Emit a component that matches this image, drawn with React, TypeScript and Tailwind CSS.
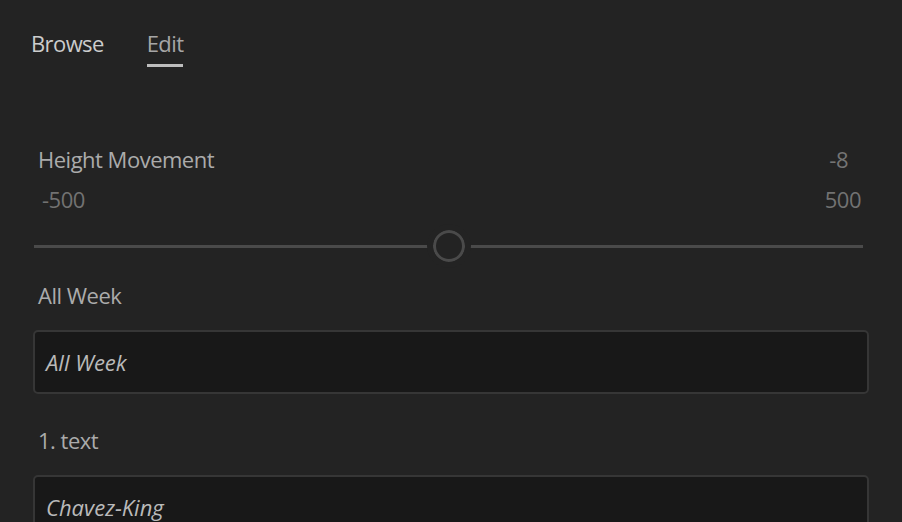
import React, { useState } from 'react';

const font = { fontFamily: '"Open Sans", "Noto Sans", sans-serif' };

export default function App() {
  const [tab, setTab] = useState<'browse' | 'edit'>('edit');
  const [value] = useState(-8);
  const min = -500;
  const max = 500;
  // thumb snaps to the nearest step of 100
  const pct = ((Math.round(value / 100) * 100 - min) / (max - min)) * 100;

  return (
    <div className="w-[902px] h-[522px] overflow-hidden bg-[#232323]" style={font}>
      {/* Tabs */}
      <div className="flex gap-[43px] pl-[31px] pt-[29px]">
        <button
          onClick={() => setTab('browse')}
          className="flex flex-col text-[22px] leading-[28px] tracking-[-0.6px] text-[#cccccc]"
        >
          <span>Browse</span>
          <span className={`mt-[7px] h-[3px] ${tab === 'browse' ? 'bg-[#bdbdbd]' : ''}`} />
        </button>
        <button
          onClick={() => setTab('edit')}
          className="flex flex-col text-[22px] leading-[28px] tracking-[-0.6px] text-[#a6a6a6]"
        >
          <span>Edit</span>
          <span className={`mt-[7px] h-[3px] ${tab === 'edit' ? 'bg-[#bdbdbd]' : ''}`} />
        </button>
      </div>

      <div className="px-[33px] pt-[78px]">
        {/* Slider */}
        <div className="flex justify-between px-[5px] text-[22px] leading-[28px] tracking-[-0.5px]">
          <span className="text-[#ababab]">Height Movement</span>
          <span className="text-[#747474] pr-[16px]">{value}</span>
        </div>
        <div className="flex justify-between pl-[9px] pr-[8px] mt-[12px] text-[22px] leading-[28px] tracking-[-0.5px] text-[#727272]">
          <span>{min}</span>
          <span>{max}</span>
        </div>
        <div className="relative h-[32px] mt-[17px] mr-[6px] ml-[1px] flex items-center">
          <div className="h-[3px] w-full bg-[#4a4a4a]" />
          <div
            className="absolute top-0 w-[32px] h-[32px] -ml-[16px] rounded-full border-[3px] border-[#4a4a4a] bg-[#232323] outline-[6px] outline-solid outline-[#232323]"
            style={{ left: `${pct}%` }}
          />
        </div>

        {/* Fields */}
        <div className="mt-[19px] px-[5px] text-[22px] leading-[28px] tracking-[-0.5px] text-[#ababab]">All Week</div>
        <div className="mt-[21px] h-[64px] rounded-[5px] border-2 border-[#363636] bg-[#181818] flex items-center px-[11px] pt-[1px]">
          <span className="italic text-[22px] tracking-[0px] text-[#bababa]">All Week</span>
        </div>

        <div className="mt-[32px] px-[5px] text-[22px] leading-[28px] tracking-[-0.5px] text-[#ababab]">1. text</div>
        <div className="mt-[21px] h-[64px] rounded-[5px] border-2 border-[#363636] bg-[#181818] flex items-center px-[11px] pt-[1px]">
          <span className="italic text-[22px] tracking-[0px] text-[#bababa]">Chavez-King</span>
        </div>
      </div>
    </div>
  );
}
